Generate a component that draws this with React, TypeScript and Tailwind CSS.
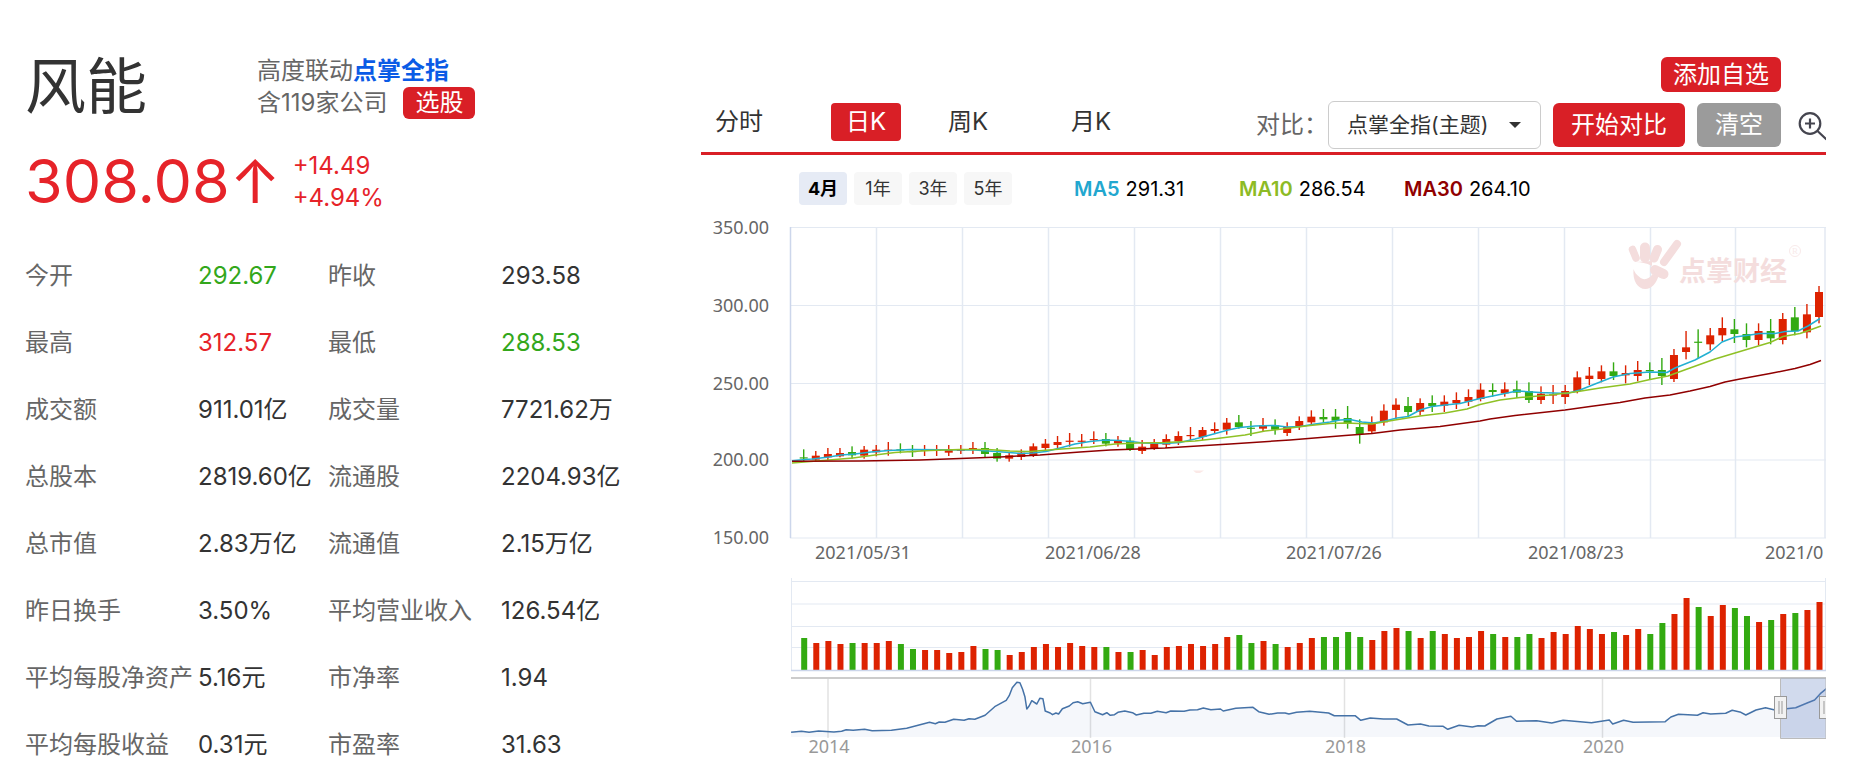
import React from 'react';

const SANS = "font-['Inter','Noto_Sans_CJK_SC',sans-serif]";
const RED = '#dd2200';
const GREEN = '#33aa11';

type Tone = 'up' | 'down' | 'flat';
type Stat = [label: string, value: string, tone: Tone];

const stats: [Stat, Stat][] = [
  [['今开', '292.67', 'down'], ['昨收', '293.58', 'flat']],
  [['最高', '312.57', 'up'], ['最低', '288.53', 'down']],
  [['成交额', '911.01亿', 'flat'], ['成交量', '7721.62万', 'flat']],
  [['总股本', '2819.60亿', 'flat'], ['流通股', '2204.93亿', 'flat']],
  [['总市值', '2.83万亿', 'flat'], ['流通值', '2.15万亿', 'flat']],
  [['昨日换手', '3.50%', 'flat'], ['平均营业收入', '126.54亿', 'flat']],
  [['平均每股净资产', '5.16元', 'flat'], ['市净率', '1.94', 'flat']],
  [['平均每股收益', '0.31元', 'flat'], ['市盈率', '31.63', 'flat']],
];

const toneClass: Record<Tone, string> = {
  up: 'text-[#e62329]',
  down: 'text-[#33a71b]',
  flat: 'text-[#333333]',
};

// Candles: colour, high, body top, body bottom, low (thirds of a unit below y = 220).
type Candle = ['r' | 'g', number, number, number, number];
const candles: Candle[] = [
  ['g', 688, 712, 714, 723], ['r', 693, 707, 719, 726], ['r', 684, 702, 712, 720], ['r', 684, 699, 709, 712],
  ['g', 679, 696, 706, 716], ['r', 678, 689, 707, 716], ['r', 675, 689, 697, 709], ['r', 666, 689, 691, 707],
  ['g', 670, 688, 690, 700], ['g', 675, 693, 695, 711], ['r', 675, 689, 691, 708], ['r', 675, 689, 691, 708],
  ['r', 675, 689, 698, 708], ['r', 675, 689, 691, 702], ['r', 666, 684, 688, 702], ['g', 666, 684, 702, 711],
  ['g', 684, 699, 716, 725], ['r', 699, 706, 716, 725], ['r', 688, 698, 711, 720], ['r', 670, 679, 707, 711],
  ['r', 657, 671, 684, 692], ['r', 648, 666, 675, 684], ['r', 639, 662, 665, 680], ['r', 642, 662, 665, 680],
  ['r', 634, 657, 660, 672], ['g', 639, 657, 671, 679], ['r', 648, 662, 670, 680], ['g', 652, 662, 688, 693],
  ['r', 660, 680, 693, 702], ['r', 657, 672, 684, 690], ['r', 643, 657, 674, 684], ['r', 634, 648, 664, 675],
  ['r', 621, 645, 647, 660], ['r', 621, 630, 651, 660], ['r', 607, 627, 633, 642], ['r', 594, 608, 629, 644],
  ['g', 585, 607, 621, 626], ['g', 603, 623, 625, 648], ['r', 594, 616, 626, 634], ['g', 598, 616, 629, 644],
  ['r', 607, 621, 639, 648], ['r', 589, 603, 621, 630], ['r', 571, 590, 607, 612], ['g', 567, 591, 598, 608],
  ['g', 567, 590, 602, 626], ['g', 558, 594, 610, 626], ['g', 598, 621, 642, 671], ['r', 589, 608, 634, 640],
  ['r', 553, 572, 607, 617], ['r', 535, 554, 570, 594], ['g', 531, 558, 576, 588], ['r', 535, 549, 575, 586],
  ['g', 526, 549, 558, 576], ['r', 526, 545, 557, 576], ['r', 517, 540, 550, 567], ['r', 508, 531, 545, 558],
  ['r', 490, 509, 537, 544], ['g', 490, 510, 516, 530], ['r', 487, 508, 520, 530], ['g', 482, 508, 518, 534],
  ['g', 487, 513, 540, 549], ['r', 499, 521, 540, 552], ['r', 495, 523, 526, 552], ['r', 495, 513, 531, 552],
  ['r', 454, 472, 513, 520], ['r', 441, 467, 477, 495], ['r', 436, 454, 477, 487], ['g', 427, 454, 468, 480],
  ['r', 436, 459, 466, 490], ['r', 423, 450, 468, 484], ['g', 427, 450, 454, 478], ['g', 414, 450, 468, 495],
  ['r', 387, 405, 477, 486], ['r', 333, 382, 396, 418], ['g', 328, 365, 368, 414], ['r', 324, 346, 373, 391],
  ['r', 292, 324, 346, 364], ['g', 297, 328, 342, 369], ['g', 310, 342, 360, 382], ['r', 310, 333, 360, 376],
  ['g', 297, 333, 355, 373], ['r', 279, 297, 360, 373], ['g', 261, 292, 333, 346], ['r', 252, 283, 337, 355],
  ['r', 198, 216, 291, 310],
];

// Volume bars: height in thirds of a unit; negative values are falling days.
const volumes = [
  -96, 81, 87, 78, -81, 81, 81, 87, -78, -63, 60, 60, 51, 54, 72, -63, -60, 45, 54, 69, 78, 69, 81, 72, 69, -69, 54,
  -54, 60, 45, 69, 72, 78, 72, 78, 99, -105, -81, 87, -78, 69, 81, 96, -99, -99, -114, -99, 90, 117, 126, -117, 96,
  -117, 108, 96, 99, 117, -108, 99, -99, -108, 96, 114, 108, 132, 123, 108, -114, 105, 123, -108, -141, 168, 216,
  -189, 162, 195, -186, -162, 144, -150, 168, -171, 180, 204,
];

const candleX = (i: number) => 803.7 + i * 12.087;

const ma5 =
  '792,460.8 800,460 812,459 829,457 841,455 855,454 871,452 889,450.5 910,449.5 940,449.7 975,450 988,451 1003,452 1020,453.5 1033,453 1046,451.5 1060,448 1075,444 1090,441.5 1105,440 1120,440.5 1131,441.5 1143,443 1165,443.5 1180,442.5 1195,439 1210,435 1228,430 1240,427.5 1255,426 1275,425.5 1287,427 1300,426.5 1315,424 1330,422 1340,420 1350,419.5 1362,422 1374,423 1385,421 1397,418 1408,416.5 1420,410 1432,406.5 1445,405 1460,403.5 1480,398.5 1495,395.5 1517,391 1540,392.5 1567,393.5 1580,390 1595,384 1613,377 1630,373.5 1650,372 1667,372.5 1675,368 1695,360 1710,352 1722,342 1735,337 1750,335 1760,333.5 1775,333.5 1785,331.5 1798,331 1808,326 1820,318.5';
const ma10 =
  '792,463 829,460 853,458 875,455 895,452.5 930,450.5 960,449.5 988,449.5 1010,451 1030,451.5 1055,449.5 1090,447 1115,444 1138,443 1165,442.5 1195,441 1217,438.5 1245,435 1265,431 1290,428 1310,425.5 1330,423.5 1345,423 1372,424 1395,420 1420,416 1445,413 1467,409 1480,404.5 1500,400 1520,397.5 1550,395 1575,392 1600,388 1630,384 1650,379.5 1668,376 1690,368 1715,359 1735,353 1770,342.5 1783,336.5 1800,333.5 1810,330 1821,326';
const ma30 =
  '792,461.3 860,461 920,460 960,458.5 1000,457 1040,455 1080,452 1110,450 1138,449 1165,448 1230,444 1290,440 1345,435.5 1372,433.5 1400,430 1440,426.5 1480,421 1490,419 1515,415.5 1565,410 1590,406.5 1620,402.5 1645,398 1670,395 1690,391 1710,386.5 1725,382 1740,379 1770,373.5 1795,368.5 1810,364.5 1821,360.5';

type Point = [number, number];
const historyEarly: Point[] = [
  [238, 637], [265, 634], [285, 637], [310, 633], [350, 636], [370, 634], [382, 629], [400, 631], [430, 628], [450, 632],
  [500, 631], [540, 625], [570, 616], [600, 607], [615, 611], [625, 606], [640, 607], [663, 598], [690, 601], [703, 596],
  [718, 598], [745, 586], [770, 560], [800, 541], [808, 527], [816, 503], [828, 487], [836, 488], [843, 508], [849, 530],
  [854, 567], [860, 558], [867, 542], [880, 552], [888, 535], [896, 536], [902, 573], [915, 579], [921, 584], [930, 579],
  [937, 582], [947, 566], [965, 558], [975, 548], [987, 545], [1000, 551], [1020, 547], [1032, 575], [1052, 584],
  [1063, 578], [1072, 586], [1083, 584], [1092, 577], [1110, 573], [1130, 578], [1140, 585], [1160, 580], [1178, 580],
  [1195, 574], [1218, 578], [1230, 573], [1265, 574], [1280, 570], [1300, 569], [1315, 564], [1335, 569], [1360, 567],
  [1367, 573], [1400, 565], [1445, 562], [1460, 575], [1487, 583],
];
const historyLate: Point[] = [
  [20, 579], [40, 579], [50, 582], [70, 577], [105, 574], [155, 579], [170, 587], [225, 587], [240, 601], [265, 594],
  [300, 597], [335, 597], [365, 615], [398, 612], [420, 618], [458, 619], [470, 628], [500, 616], [535, 621], [550, 617],
  [568, 618], [600, 597], [637, 589], [652, 604], [705, 602], [745, 609], [775, 601], [850, 608], [897, 600], [906, 612],
  [935, 601], [960, 607], [1045, 605], [1060, 591], [1080, 583], [1130, 586], [1145, 578], [1165, 582], [1205, 580],
  [1222, 571], [1245, 577], [1258, 585], [1285, 570], [1310, 563], [1335, 570], [1365, 566], [1390, 563], [1420, 549],
  [1440, 540], [1455, 521], [1471, 506],
];
const history = [
  ...historyEarly.map(([x, y]) => [700 + x / 2.613, 520 + y / 3]),
  ...historyLate.map(([x, y]) => [1270 + x / 2.644, 520 + y / 3]),
]
  .map(([x, y]) => `${x.toFixed(1)},${y.toFixed(1)}`)
  .join(' ');

const priceTicks: [string, number][] = [
  ['350.00', 227.5],
  ['300.00', 305.5],
  ['250.00', 383.5],
  ['200.00', 460],
  ['150.00', 538],
];
const dateTicks: [string, number][] = [
  ['2021/05/31', 815],
  ['2021/06/28', 1045],
  ['2021/07/26', 1286],
  ['2021/08/23', 1528],
  ['2021/0', 1765],
];
const yearTicks: [string, number][] = [
  ['2014', 828],
  ['2016', 1090.5],
  ['2018', 1344.5],
  ['2020', 1602.5],
];
const gridX = [876.5, 962.5, 1048.5, 1134.5, 1220.5, 1306.5, 1392.5, 1478.5, 1564.5, 1650.5, 1735.5, 1825];

function Watermark() {
  return (
    <g fill="#f4dddd" stroke="#f4dddd">
      <g strokeLinecap="round" fill="none">
        <path d="M1632.5 249.500l3.500 8.500" strokeWidth="7.5" />
        <path d="M1645 247.500v10" strokeWidth="10" />
        <path d="M1657.500 249.500l-3.500 8.500" strokeWidth="9" />
        <path d="M1677 244l-13 18" strokeWidth="8" />
        <path d="M1655 270l8.500 4" strokeWidth="10" />
      </g>
      <path
        stroke="none"
        d="M1633.500 269c-1 12 4 20 12 20c6 0 11-6 13-13l-6-2c-3 5-9 7-13 3c-3-2-5-5-6-8z M1636 262l16-1v5c-6-3-11-4-16-4z"
      />
      <text x="1679" y="281" stroke="none" fontSize="27" fontWeight="700" className={SANS}>
        点掌财经
      </text>
      <g opacity="0.6">
        <circle cx="1795" cy="251" r="5.5" fill="none" strokeWidth="1" />
        <text x="1795" y="254" stroke="none" fontSize="9" textAnchor="middle" className="font-['Liberation_Serif',serif]">
          R
        </text>
      </g>
    </g>
  );
}

function Handle({ x }: { x: number }) {
  return (
    <g stroke="#999999" fill="#f2f2f2">
      <rect x={x - 6} y="696.5" width="12" height="22" />
      <path d={`M${x - 1.5} 701v13M${x + 1.5} 701v13`} />
    </g>
  );
}

function Chart() {
  return (
    <svg
      viewBox="701 212 1125 566"
      className="block h-auto w-full font-['Noto_Sans','Noto_Sans_CJK_SC',sans-serif] text-[18px]"
      role="img"
      aria-label="日K"
    >
      <g stroke="#e3e9f2" fill="none">
        {gridX.map((x) => (
          <path key={x} d={`M${x} 227V538`} strokeWidth="1.5" />
        ))}
        {priceTicks.map(([t, y]) => (
          <path key={t} d={`M790 ${y}H1826`} />
        ))}
      </g>
      <path d="M790.5 227V538" stroke="#ccd6eb" strokeWidth="1.5" />
      <g fill="#666666">
        {priceTicks.map(([t, y]) => (
          <text key={t} x="769" y={Math.round(y + 6)} textAnchor="end">
            {t}
          </text>
        ))}
        {dateTicks.map(([t, x]) => (
          <text key={t} x={x} y="559">
            {t}
          </text>
        ))}
      </g>
      <Watermark />
      <path d="M1193 470.5h11l-4 2.5h-4z" fill="#fbe9e7" />
      {candles.map(([c, high, top, bottom, low], i) => {
        const x = candleX(i);
        const colour = c === 'r' ? RED : GREEN;
        return (
          <g key={i} fill={colour}>
            <rect x={x - 0.7} y={220 + high / 3} width="1.4" height={(low - high) / 3} />
            <rect x={x - 4} y={220 + top / 3} width="8" height={Math.max((bottom - top) / 3, 1.2)} />
          </g>
        );
      })}
      <g fill="none" strokeWidth="1.5" strokeLinejoin="round">
        <polyline points={ma5} stroke="#22b0d2" />
        <polyline points={ma10} stroke="#8fc126" />
        <polyline points={ma30} stroke="#900000" />
      </g>

      <g stroke="#e3e9f2">
        <path d="M791.5 578V671M1825.5 578V671" />
        <path d="M791 581.5H1826M791 604H1826M791 626.5H1826M791 647.5H1826" />
      </g>
      {volumes.map((v, i) => (
        <rect
          key={i}
          x={candleX(i) - 2.5}
          y={670 - Math.abs(v) / 3}
          width="6"
          height={Math.abs(v) / 3}
          fill={v > 0 ? RED : GREEN}
        />
      ))}
      <path d="M791 670.5H1826" stroke="#ccd6eb" strokeWidth="1.5" />

      <g stroke="#e2e2e2">
        {yearTicks.map(([t, x]) => (
          <path key={t} d={`M${x} 679V738`} strokeWidth="1.5" />
        ))}
      </g>
      <polygon points={`791,737 ${history} 1826,737`} fill="#335cad" fillOpacity="0.05" />
      <polyline points={history} fill="none" stroke="#4572a7" strokeWidth="1.5" strokeLinejoin="round" />
      <path d="M791 678H1826" stroke="#cccccc" strokeWidth="2" />
      <path d="M1780.5 678V738.5H1826V678z" fill="#6685c2" fillOpacity="0.3" stroke="#bbbbbb" strokeWidth="1" />
      <Handle x={1780.5} />
      <Handle x={1825.5} />
      <g fill="#999999" textAnchor="middle">
        {yearTicks.map(([t, x]) => (
          <text key={t} x={x + 1} y="753">
            {t}
          </text>
        ))}
      </g>
    </svg>
  );
}

function Averages() {
  return (
    <dl className="ml-[62px] grid grid-cols-[165px_165px_165px] text-xl leading-7 text-black">
      <div className="flex gap-1.5">
        <dt className="font-semibold text-[#22a7cf]">MA5</dt>
        <dd>291.31</dd>
      </div>
      <div className="flex gap-1.5">
        <dt className="font-semibold text-[#8dbb25]">MA10</dt>
        <dd>286.54</dd>
      </div>
      <div className="flex gap-1.5">
        <dt className="font-semibold text-[#900000]">MA30</dt>
        <dd>264.10</dd>
      </div>
    </dl>
  );
}

export default function App() {
  return (
    <div className={`flex min-h-screen items-start bg-white text-2xl leading-8 ${SANS}`}>
      <aside className="w-[701px] shrink-0 pt-[55px] pl-[25px]">
        <header className="flex">
          <h1 className="w-[232px] text-[61px] leading-[64px] text-[#333333]">风能</h1>
          <div className="text-[#666666]">
            <p>
              高度联动
              <a href="#index" className="font-bold text-[#0a5be6]">
                点掌全指
              </a>
            </p>
            <p className="flex gap-4">
              含119家公司
              <button type="button" className="h-8 w-[72px] rounded-md bg-[#d91f26] text-white">
                选股
              </button>
            </p>
          </div>
        </header>
        <section className="mt-[30px] flex gap-3 text-[#e62329]">
          <strong className="text-[61px] leading-[64px] font-normal">308.08↑</strong>
          <div className="pt-px">
            <p>+14.49</p>
            <p>+4.94%</p>
          </div>
        </section>
        <table className="mt-7 table-fixed text-left whitespace-nowrap">
          <tbody>
            {stats.map(([a, b]) => (
              <tr key={a[0]} className="h-[67px]">
                <th scope="row" className="w-[173px] p-0 font-normal text-[#666666]">{a[0]}</th>
                <td className={`w-[130px] p-0 ${toneClass[a[2]]}`}>{a[1]}</td>
                <th scope="row" className="w-[173px] p-0 font-normal text-[#666666]">{b[0]}</th>
                <td className={`w-[150px] p-0 ${toneClass[b[2]]}`}>{b[1]}</td>
              </tr>
            ))}
          </tbody>
        </table>
      </aside>

      <main className="mr-[37px] min-w-0 flex-1 pt-[57px]">
        <div className="flex justify-end pr-[45px]">
          <button type="button" className="h-[35px] w-[120px] rounded-md bg-[#d91f26] text-white">
            添加自选
          </button>
        </div>
        <div className="flex h-[63px] items-center justify-between overflow-hidden border-b-[3px] border-[#d91f26]">
          <nav className="grid grid-cols-[130px_102px_123px_70px] justify-items-start text-[#333333]">
            <button type="button" className="h-[38px] pl-3.5">分时</button>
            <button type="button" className="h-[38px] w-[70px] rounded-sm bg-[#d91f26] text-white">日K</button>
            <button type="button" className="h-[38px] w-[70px]">周K</button>
            <button type="button" className="h-[38px] w-[70px]">月K</button>
          </nav>
          <div className="flex items-center pt-1.5">
            <label htmlFor="compare" className="text-[#666666]">对比：</label>
            <div className="relative">
              <select
                id="compare"
                className="block h-12 w-[213px] appearance-none rounded-md border border-[#cccccc] bg-white pl-[18px] text-[21px] text-[#333333]"
              >
                <option>点掌全指(主题)</option>
              </select>
              <svg viewBox="0 0 12 6" className="pointer-events-none absolute top-[21px] right-5 h-1.5 w-3" fill="#333333">
                <path d="M0 0h12L6 6z" />
              </svg>
            </div>
            <button type="button" className="ml-3 h-11 w-[132px] rounded-md bg-[#d91f26] text-white">
              开始对比
            </button>
            <button type="button" className="ml-3 h-11 w-[84px] rounded-md bg-[#9b9b9b] text-white">
              清空
            </button>
            <button type="button" aria-label="放大" className="ml-4 w-[29px]">
              <svg viewBox="0 0 29 32" className="block h-8 w-[29px]" fill="none" stroke="#45454f" strokeWidth="2.2">
                <circle cx="13" cy="14.500" r="10.300" />
                <path d="M13 9.500v10M8 14.500h10M20.500 22l9 8.500" />
              </svg>
            </button>
          </div>
        </div>
        <div className="flex h-[57px] items-center pt-2.5 pl-[98px]">
          <div className="flex gap-[7px] text-lg leading-[33px] text-[#333333]">
            <button type="button" className="h-[33px] w-12 rounded-sm bg-[#e6ebf5] font-bold text-black">4月</button>
            <button type="button" className="h-[33px] w-12 rounded-sm bg-[#f7f7f7]">1年</button>
            <button type="button" className="h-[33px] w-12 rounded-sm bg-[#f7f7f7]">3年</button>
            <button type="button" className="h-[33px] w-12 rounded-sm bg-[#f7f7f7]">5年</button>
          </div>
          <Averages />
        </div>
        <Chart />
      </main>
    </div>
  );
}
